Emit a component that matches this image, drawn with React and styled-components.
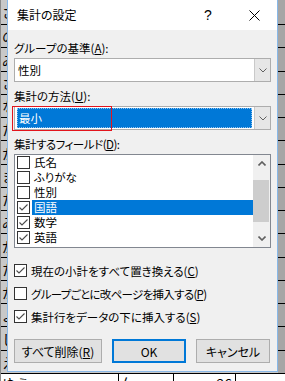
import React from 'react';
import styled, { createGlobalStyle } from 'styled-components';

const Global = createGlobalStyle`
  html, body { margin: 0; padding: 0; }
  body {
    width: 285px; height: 381px; overflow: hidden; background: #fff;
    font-family: "Noto Sans CJK JP", "Noto Sans", sans-serif;
  }
`;

const FONT = `"Noto Sans CJK JP", "Noto Sans", sans-serif`;

const Stage = styled.div`
  position: relative;
  width: 285px;
  height: 381px;
  overflow: hidden;
  background: #fff;
`;

/* ---------- spreadsheet behind ---------- */
const Sheet = styled.div`
  display: flex;
  flex-direction: column;
  border-left: 1px solid #8a8a8a;
`;

/* rows hidden behind the dialog only show a thin strip at each side */
const CoveredRow = styled.div`
  flex: none;
  box-sizing: border-box;
  height: ${p => p.$h}px;
  display: grid;
  grid-template-columns: 7px 1fr 7px;
  border-bottom: 1px solid #000;
`;

const OpenRow = styled.div`
  flex: 1;
  display: grid;
  grid-template-columns: 118px 55px 62px 1fr;
`;

const Cell = styled.div`
  box-sizing: border-box;
  border-right: ${p => (p.$line ? '1px solid #000' : 'none')};
  background: ${p => p.$bg || '#fff'};
  font: 14px ${FONT};
  color: #000;
  display: flex;
  align-items: ${p => (p.$top ? 'flex-start' : 'center')};
  justify-content: ${p => (p.$right ? 'flex-end' : 'flex-start')};
  padding: 0 ${p => (p.$right ? 3 : 0)}px 0 ${p => (p.$right ? 0 : 1)}px;
  line-height: 18px;
  white-space: nowrap;
  overflow: hidden;
`;

/* ---------- dialog ---------- */
const Dialog = styled.div`
  position: absolute;
  left: 7px;
  top: -1px;
  width: 271px;
  height: 373px;
  box-sizing: border-box;
  border: 1px solid #88b8e8;
  background: #f0f0f0;
  display: flex;
  flex-direction: column;
  font-family: ${FONT};
  font-size: 11.5px;
  font-feature-settings: "palt";
  color: #000;
`;

const TitleBar = styled.div`
  flex: none;
  height: 30px;
  background: #fff;
  display: flex;
  align-items: center;
`;

const Title = styled.div`
  flex: 1;
  padding-left: 9px;
  font-size: 12px;
  line-height: 16px;
`;

const CaptionBtn = styled.div`
  width: 46px;
  height: 30px;
  display: flex;
  align-items: center;
  justify-content: center;
  font: 14px "Liberation Sans", sans-serif;
`;

const Body = styled.div`
  flex: 1;
  display: flex;
  flex-direction: column;
  padding: 10px 6px 7px;
`;

const Label = styled.div`
  height: 16px;
  line-height: 16px;
  margin-bottom: 2px;
  white-space: nowrap;
  letter-spacing: ${p => p.$ls || 0}px;
`;

const U = styled.span`
  text-decoration: underline;
  text-underline-offset: 1px;
`;

const ComboWrap = styled.div`
  position: relative;
  margin-bottom: 6px;
`;

const Combo = styled.div`
  height: 24px;
  box-sizing: border-box;
  border: 1px solid #adadad;
  background: #fff;
  display: flex;
`;

const Field = styled.div`
  flex: 1;
  display: flex;
  align-items: center;
  padding: ${p => (p.$focused ? '1px 2px' : '0 3px')};
`;

const Selected = styled.div`
  flex: 1;
  align-self: stretch;
  box-sizing: border-box;
  background: #0078d7;
  color: #fff;
  border: 1px dotted #8cc0ee;
  display: flex;
  align-items: center;
  padding-left: 1px;
`;

const DropBtn = styled.div`
  width: 16px;
  box-sizing: border-box;
  border-left: 1px solid #c9c9c9;
  background: #e6e6e6;
  display: flex;
  align-items: center;
  justify-content: center;
`;

const Annotation = styled.div`
  position: absolute;
  left: -2px;
  top: 0;
  width: 100px;
  height: 25px;
  box-sizing: border-box;
  border: 1px solid #e3141c;
  pointer-events: none;
`;

const ListBox = styled.div`
  height: 94px;
  box-sizing: border-box;
  border: 1px solid #828790;
  background: #fff;
  display: flex;
`;

const Items = styled.div`
  flex: 1;
  display: flex;
  flex-direction: column;
`;

const Item = styled.div`
  height: 15px;
  display: flex;
  align-items: center;
  padding-left: 2px;
`;

const ItemText = styled.div`
  flex: 1;
  height: 15px;
  line-height: 15px;
  margin-left: 2px;
  padding-left: 2px;
  background: ${p => (p.$sel ? '#0078d7' : 'transparent')};
  color: ${p => (p.$sel ? '#fff' : '#000')};
`;

const ScrollBar = styled.div`
  width: 17px;
  background: #f0f0f0;
  display: flex;
  flex-direction: column;
`;

const ScrollArrow = styled.div`
  height: 17px;
  display: flex;
  align-items: center;
  justify-content: center;
`;

const Track = styled.div`
  flex: 1;
  display: flex;
  flex-direction: column;
`;

const Thumb = styled.div`
  margin: 8px 1px 0 0;
  height: 42px;
  background: #cdcdcd;
`;

const Box = styled.div`
  flex: none;
  width: 13px;
  height: 13px;
  box-sizing: border-box;
  border: 1px solid #333;
  background: #fff;
  display: flex;
  align-items: center;
  justify-content: center;
`;

const Options = styled.div`
  margin-top: 11px;
  display: flex;
  flex-direction: column;
`;

const Option = styled.div`
  height: 23px;
  display: flex;
  align-items: center;
`;

const OptionText = styled.span`
  margin-left: 4px;
  white-space: nowrap;
  letter-spacing: ${p => p.$ls || 0}px;
`;

const Buttons = styled.div`
  margin-top: 11px;
  display: flex;
  gap: 10px;
`;

const Button = styled.div`
  width: ${p => p.$w}px;
  height: 24px;
  box-sizing: border-box;
  background: #e1e1e1;
  border: ${p => (p.$default ? '2px solid #0078d7' : '1px solid #adadad')};
  display: flex;
  align-items: center;
  justify-content: center;
  font-size: 12px;
  white-space: nowrap;
`;

/* ---------- icons ---------- */
const Chevron = ({ up, bold }) => (
  <svg width="8" height="5" viewBox="0 0 8 5">
    <polyline
      points={up ? '0.5,4.5 4,1 7.5,4.5' : '0.5,0.5 4,4 7.5,0.5'}
      fill="none"
      stroke="#606060"
      strokeWidth={bold ? 1.6 : 1}
    />
  </svg>
);

const Check = () => (
  <svg width="11" height="11" viewBox="0 0 11 11">
    <polyline points="1.5,5.5 4,8 9.5,2.5" fill="none" stroke="#4a4a4a" strokeWidth="1.1" />
  </svg>
);

const CheckBox = ({ checked }) => <Box>{checked && <Check />}</Box>;

const CloseIcon = () => (
  <svg width="11" height="11" viewBox="0 0 11 11">
    <path d="M0.5 0.5 L10.5 10.5 M10.5 0.5 L0.5 10.5" stroke="#000" strokeWidth="1" />
  </svg>
);

/* ---------- data ---------- */
const lines = [24, 47, 71, 94, 117, 140, 164, 187, 210, 233, 257, 280, 303, 326, 350, 373];
const initials = ['さ', 'の', 'み', 'さ', 'な', 'た', 'か', 'ま', 'た', 'み', 'が', 'た', 'か', 'よ', 'し', 'え'];

const fields = [
  { name: '氏名', checked: false },
  { name: 'ふりがな', checked: false },
  { name: '性別', checked: false },
  { name: '国語', checked: true, sel: true },
  { name: '数学', checked: true },
  { name: '英語', checked: true },
];

export default function App() {
  let prev = -1;
  return (
    <Stage>
      <Global />
      <Sheet>
        {lines.map((l, i) => {
          const h = l - prev;
          prev = l;
          return (
            <CoveredRow key={i} $h={h}>
              <Cell $bg="#c8c8c8">{initials[i]}</Cell>
              <Cell $bg="#c8c8c8" />
              <Cell $bg="#a6a6a6" />
            </CoveredRow>
          );
        })}
        <OpenRow>
          <Cell $top $line>ゆう</Cell>
          <Cell $top $line>女</Cell>
          <Cell $top $right $line>26</Cell>
          <Cell />
        </OpenRow>
      </Sheet>

      <Dialog>
        <TitleBar>
          <Title>集計の設定</Title>
          <CaptionBtn>?</CaptionBtn>
          <CaptionBtn><CloseIcon /></CaptionBtn>
        </TitleBar>
        <Body>
          <Label>グループの基準(<U>A</U>):</Label>
          <ComboWrap>
            <Combo>
              <Field>性別</Field>
              <DropBtn><Chevron /></DropBtn>
            </Combo>
          </ComboWrap>

          <Label>集計の方法(<U>U</U>):</Label>
          <ComboWrap>
            <Combo>
              <Field $focused><Selected>最小</Selected></Field>
              <DropBtn><Chevron /></DropBtn>
            </Combo>
            <Annotation />
          </ComboWrap>

          <Label $ls={-0.5}>集計するフィールド(<U>D</U>):</Label>
          <ListBox>
            <Items>
              {fields.map(f => (
                <Item key={f.name}>
                  <CheckBox checked={f.checked} />
                  <ItemText $sel={f.sel}>{f.name}</ItemText>
                </Item>
              ))}
            </Items>
            <ScrollBar>
              <ScrollArrow><Chevron up bold /></ScrollArrow>
              <Track><Thumb /></Track>
              <ScrollArrow><Chevron bold /></ScrollArrow>
            </ScrollBar>
          </ListBox>

          <Options>
            <Option>
              <CheckBox checked />
              <OptionText>現在の小計をすべて置き換える(<U>C</U>)</OptionText>
            </Option>
            <Option>
              <CheckBox />
              <OptionText $ls={-0.7}>グループごとに改ページを挿入する(<U>P</U>)</OptionText>
            </Option>
            <Option>
              <CheckBox checked />
              <OptionText>集計行をデータの下に挿入する(<U>S</U>)</OptionText>
            </Option>
          </Options>

          <Buttons>
            <Button $w={88}>すべて削除(<U>R</U>)</Button>
            <Button $w={74} $default>OK</Button>
            <Button $w={74}>キャンセル</Button>
          </Buttons>
        </Body>
      </Dialog>
    </Stage>
  );
}
